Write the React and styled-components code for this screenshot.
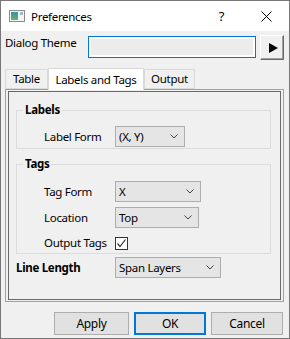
import styled, { createGlobalStyle } from "styled-components";

const GlobalStyle = createGlobalStyle`
  html, body {
    margin: 0;
    padding: 0;
    background: #ffffff;
  }
  body {
    font-family: "Noto Sans", "Liberation Sans", sans-serif;
    font-size: 11.5px;
    letter-spacing: -0.3px;
    color: #000;
  }
`;

// Janela
const Window = styled.div`
  box-sizing: border-box;
  width: 290px;
  height: 339px;
  border: 1px solid #767676;
  background: #f0f0f0;
  display: flex;
  flex-direction: column;
`;

const TitleBar = styled.div`
  height: 30px;
  background: #fff;
  display: flex;
  align-items: center;
  padding-left: 8px;
`;

const Title = styled.span`
  margin-left: 6px;
  flex: 1;
`;

const TitleButton = styled.span`
  width: ${props => props.w}px;
  display: flex;
  justify-content: center;
  font-size: 13px;
`;

const Body = styled.div`
  flex: 1;
  display: flex;
  flex-direction: column;
  padding: 4px 5px 0 4px;
`;

const ThemeRow = styled.div`
  display: flex;
  align-items: flex-start;
  height: 25px;
`;

const ThemeLabel = styled.span`
  width: 83px;
  line-height: 16px;
`;

const ThemeField = styled.div`
  box-sizing: border-box;
  margin-top: 1px;
  width: 168px;
  height: 22px;
  border: 1px solid #0078d7;
  padding: 2px;
  background: #fff;
  div {
    height: 100%;
    background: #ececec;
  }
`;

const ArrowButton = styled.div`
  box-sizing: border-box;
  margin-left: 4px;
  width: 24px;
  height: 25px;
  background: #f0f0f0;
  border-top: 1px solid #fff;
  border-left: 1px solid #fff;
  border-right: 1px solid #696969;
  border-bottom: 1px solid #696969;
  box-shadow: inset -1px -1px 0 #a0a0a0;
  display: flex;
  align-items: center;
  justify-content: center;
  padding-left: 2px;
`;

const TabStrip = styled.div`
  margin-top: 8px;
  display: flex;
  align-items: flex-end;
  height: 21px;
  position: relative;
  z-index: 1;
`;

const Tab = styled.div`
  box-sizing: border-box;
  width: ${props => props.w}px;
  height: ${props => (props.active ? 22 : 20)}px;
  margin-bottom: ${props => (props.active ? -1 : 0)}px;
  border: 1px solid #d9d9d9;
  border-bottom: ${props => (props.active ? "none" : "1px solid #d9d9d9")};
  background: ${props => (props.active ? "#fff" : "#f0f0f0")};
  display: flex;
  align-items: center;
  justify-content: center;
  line-height: 16px;
`;

const Panel = styled.div`
  box-sizing: border-box;
  height: 213px;
  border: 1px solid #a0a0a0;
  padding: 1px 2px;
  display: flex;
`;

const Frame = styled.div`
  flex: 1;
  border: 1px solid #696969;
  display: flex;
  flex-direction: column;
  padding: 0 9px 0 7px;
`;

const Group = styled.fieldset`
  margin: ${props => props.top}px 0 0 0;
  padding: 0 0 1px 6px;
  border: 1px solid #dcdcdc;
  min-width: 0;
  display: flex;
  flex-direction: column;
`;

const Legend = styled.legend`
  padding: 0 2px;
  font-weight: bold;
  line-height: 16px;
`;

const Row = styled.div`
  display: flex;
  align-items: center;
  margin-top: ${props => props.top}px;
  padding-left: ${props => props.indent}px;
  height: ${props => props.h || 21}px;
`;

const RowLabel = styled.span`
  width: ${props => props.w}px;
  font-weight: ${props => (props.bold ? "bold" : "normal")};
  line-height: 16px;
`;

const Select = styled.div`
  box-sizing: border-box;
  width: ${props => props.w}px;
  height: 21px;
  border: 1px solid #adadad;
  background: #e5e5e5;
  display: flex;
  align-items: center;
  justify-content: space-between;
  padding: 0 6px 0 3px;
  line-height: 16px;
`;

const CheckBox = styled.div`
  box-sizing: border-box;
  width: 13px;
  height: 13px;
  border: 1px solid #333;
  background: #fff;
  display: flex;
  align-items: center;
  justify-content: center;
`;

const ButtonBar = styled.div`
  margin-top: 10px;
  padding-right: 1px;
  display: flex;
  justify-content: flex-end;
  gap: 5px;
`;

const Button = styled.div`
  box-sizing: border-box;
  width: ${props => props.w}px;
  height: 23px;
  border: ${props => (props.primary ? "2px solid #0078d7" : "1px solid #adadad")};
  background: #e1e1e1;
  display: flex;
  align-items: center;
  justify-content: center;
  line-height: 16px;
  font-size: 12px;
`;

const Chevron = () => (
  <svg width="8" height="5" viewBox="0 0 8 5">
    <path d="M0.5 0.5 L4 4 L7.5 0.5" fill="none" stroke="#444" strokeWidth="1" />
  </svg>
);

const DropDown = ({ w, value }) => (
  <Select w={w}>
    <span>{value}</span>
    <Chevron />
  </Select>
);

const AppIcon = () => (
  <svg width="16" height="12" viewBox="0 0 16 12">
    <rect x="0.5" y="0.5" width="15" height="11" fill="#f4f4f4" stroke="#8c8c8c" />
    <defs>
      <linearGradient id="g" x1="0" y1="0" x2="0" y2="1">
        <stop offset="0" stopColor="#3b8fa0" />
        <stop offset="1" stopColor="#5fb36a" />
      </linearGradient>
    </defs>
    <rect x="2" y="2" width="7" height="8" fill="url(#g)" />
    <rect x="11" y="2" width="3" height="3" fill="#9fb8c8" />
  </svg>
);

export default function App() {
  return (
    <>
      <GlobalStyle />
      <Window>
        <TitleBar>
          <AppIcon />
          <Title>Preferences</Title>
          <TitleButton w={43}>?</TitleButton>
          <TitleButton w={46}>
            <svg width="11" height="11" viewBox="0 0 11 11">
              <path d="M0.5 0.5 L10.5 10.5 M10.5 0.5 L0.5 10.5" stroke="#000" strokeWidth="1" />
            </svg>
          </TitleButton>
        </TitleBar>
        <Body>
          <ThemeRow>
            <ThemeLabel>Dialog Theme</ThemeLabel>
            <ThemeField><div /></ThemeField>
            <ArrowButton>
              <svg width="9" height="10" viewBox="0 0 9 10">
                <path d="M0 0 L9 5 L0 10 Z" fill="#000" />
              </svg>
            </ArrowButton>
          </ThemeRow>
          <TabStrip>
            <Tab w={43}>Table</Tab>
            <Tab w={96} active>Labels and Tags</Tab>
            <Tab w={51}>Output</Tab>
          </TabStrip>
          <Panel>
            <Frame>
              <Group top={10}>
                <Legend>Labels</Legend>
                <Row top={8} indent={21}>
                  <RowLabel w={71}>Label Form</RowLabel>
                  <DropDown w={70} value="(X, Y)" />
                </Row>
              </Group>
              <Group top={7}>
                <Legend>Tags</Legend>
                <Row top={9} indent={21}>
                  <RowLabel w={71}>Tag Form</RowLabel>
                  <DropDown w={86} value="X" />
                </Row>
                <Row top={5} indent={21}>
                  <RowLabel w={71}>Location</RowLabel>
                  <DropDown w={84} value="Top" />
                </Row>
                <Row top={6} indent={21} h={18}>
                  <RowLabel w={71}>Output Tags</RowLabel>
                  <CheckBox>
                    <svg width="11" height="11" viewBox="0 0 11 11">
                      <path d="M1.5 5.5 L4 8.5 L9.5 1.5" fill="none" stroke="#333" strokeWidth="1.2" />
                    </svg>
                  </CheckBox>
                </Row>
              </Group>
              <Row top={3} indent={0}>
                <RowLabel w={99} bold>Line Length</RowLabel>
                <DropDown w={106} value="Span Layers" />
              </Row>
            </Frame>
          </Panel>
          <ButtonBar>
            <Button w={75}>Apply</Button>
            <Button w={72} primary>OK</Button>
            <Button w={72}>Cancel</Button>
          </ButtonBar>
        </Body>
      </Window>
    </>
  );
}
